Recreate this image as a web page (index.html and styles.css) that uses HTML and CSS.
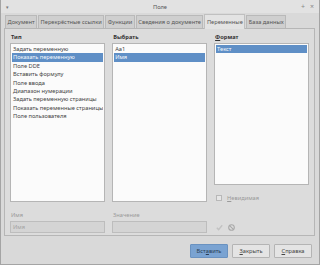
FILE: index.html
```html
<!DOCTYPE html>
<html lang="ru">
<head>
<meta charset="utf-8">
<link rel="stylesheet" href="styles.css">
</head>
<body>
<div class="window">
  <div class="titlebar">
    <span class="menu-arrow">▾</span>
    <span class="title">Поле</span>
    <span class="wm-btns"><span>+</span><span>×</span></span>
  </div>
  <div class="tabs">
    <div class="tab">Документ</div>
    <div class="tab">Перекрёстные ссылки</div>
    <div class="tab">Функции</div>
    <div class="tab">Сведения о документе</div>
    <div class="tab active">Переменные</div>
    <div class="tab">База данных</div>
  </div>
  <div class="panel">
    <div class="cols">
      <div class="col">
        <div class="label">Тип</div>
        <div class="list tall">
          <div class="item">Задать переменную</div>
          <div class="item sel">Показать переменную</div>
          <div class="item">Поле DDE</div>
          <div class="item">Вставить формулу</div>
          <div class="item">Поле ввода</div>
          <div class="item">Диапазон нумерации</div>
          <div class="item">Задать переменную страницы</div>
          <div class="item">Показать переменные страницы</div>
          <div class="item">Поле пользователя</div>
        </div>
      </div>
      <div class="col">
        <div class="label">Выбрать</div>
        <div class="list tall">
          <div class="item">Аа1</div>
          <div class="item sel">Имя</div>
        </div>
      </div>
      <div class="col">
        <div class="label"><u>Ф</u>ормат</div>
        <div class="list short">
          <div class="item sel">Текст</div>
        </div>
        <div class="check-row">
          <span class="checkbox"></span><span class="dim"><u>Н</u>евидимая</span>
        </div>
      </div>
    </div>
    <div class="cols bottom">
      <div class="col">
        <div class="label dim">Имя</div>
        <div class="input">Имя</div>
      </div>
      <div class="col">
        <div class="label dim">Значение</div>
        <div class="input"></div>
      </div>
      <div class="col icons">
        <svg width="7" height="7" viewBox="0 0 7 7"><path d="M0.8 3.8 L2.6 5.6 L6.2 1.2" fill="none" stroke="#c2c2c2" stroke-width="1.4"/></svg>
        <svg width="7" height="7" viewBox="0 0 7 7"><circle cx="3.5" cy="3.5" r="2.8" fill="none" stroke="#a9a9a9" stroke-width="1.1"/><path d="M1.6 1.6 L5.4 5.4" stroke="#a9a9a9" stroke-width="1.1"/></svg>
      </div>
    </div>
  </div>
  <div class="buttons">
    <button class="btn primary">Вст<u>а</u>вить</button>
    <button class="btn"><u>З</u>акрыть</button>
    <button class="btn"><u>С</u>правка</button>
  </div>
</div>
</body>
</html>
```
FILE: styles.css
```css
* { box-sizing: border-box; }
html, body { margin: 0; padding: 0; }
body {
  width: 320px;
  height: 265px;
  overflow: hidden;
  font-family: "Noto Sans", "DejaVu Sans", sans-serif;
  font-size: 5.7px;
  color: #3a3a3a;
  background: #d6d6d6;
}
.window {
  width: 320px;
  height: 265px;
  background: #d9d9d9;
  border: 1px solid #a4a4a4;
  border-top: none;
  display: flex;
  flex-direction: column;
}
.titlebar {
  height: 13px;
  background: #e2e2e2;
  display: flex;
  align-items: center;
  padding: 0 5px;
  position: relative;
  color: #555;
}
.menu-arrow { font-size: 5px; color: #777; }
.title {
  position: absolute;
  left: 0; right: 0;
  text-align: center;
  color: #555;
}
.wm-btns {
  margin-left: auto;
  display: flex;
  gap: 5px;
  font-size: 7px;
  color: #888;
  line-height: 1;
}
.tabs {
  display: flex;
  padding: 1px 0 0 4px;
  height: 15px;
  align-items: flex-end;
  gap: 1px;
}
.tab {
  height: 13px;
  padding: 0 1.5px;
  display: flex;
  align-items: center;
  background: #cfcfcf;
  border: 1px solid #b9b9b9;
  border-bottom: none;
  color: #555;
  white-space: nowrap;
}
.tab.active {
  background: #e3e3e3;
  height: 15px;
  margin-bottom: -1px;
  position: relative;
  z-index: 1;
  border-color: #c0c0c0;
}
.panel {
  margin: 0 4px 0 3px;
  height: 208px;
  border: 1px solid #b6b6b6;
  background: #dcdcdc;
  padding: 4px 5px 0 5px;
}
.cols {
  display: flex;
  gap: 7px;
}
.col {
  width: 96px;
  display: flex;
  flex-direction: column;
}
.label {
  font-weight: bold;
  color: #333;
  height: 10px;
  line-height: 8px;
  padding-left: 1px;
}
.label.dim { font-weight: normal; color: #9a9a9a; height: 8px; }
.list {
  background: #fbfbfb;
  border: 1px solid #b5b5b5;
  padding: 1px;
}
.list.tall { height: 159px; }
.list.short { height: 142px; }
.item {
  height: 8.4px;
  line-height: 8.4px;
  padding-left: 1px;
  white-space: nowrap;
  overflow: hidden;
  color: #444;
}
.item.sel {
  background: #5f8fc6;
  color: #f4f8fc;
}
.check-row {
  display: flex;
  align-items: center;
  gap: 5px;
  margin-top: 9px;
  padding-left: 2px;
}
.checkbox {
  width: 6px; height: 6px;
  border: 1px solid #b8b8b8;
  background: #e6e6e6;
}
.dim { color: #9a9a9a; }
.bottom { margin-top: 9px; }
.input {
  height: 12px;
  border: 1px solid #bdbdbd;
  background: #d4d4d4;
  color: #a3a3a3;
  padding-left: 2px;
  line-height: 10px;
  margin-top: 2px;
}
.icons {
  flex-direction: row;
  align-items: center;
  gap: 5px;
  padding: 10px 0 0 2px;
}
.buttons {
  display: flex;
  justify-content: flex-end;
  gap: 4px;
  padding: 8px 7px 0 0;
}
.btn {
  width: 38px;
  height: 14px;
  font-family: inherit;
  font-size: 5.7px;
  color: #444;
  background: #e4e4e4;
  border: 1px solid #b4b4b4;
  border-radius: 1px;
  padding: 0;
}
.btn.primary {
  background: #7aa3d2;
  border-color: #6a92c0;
  color: #2c3f55;
}
u { text-decoration: underline; }
```
